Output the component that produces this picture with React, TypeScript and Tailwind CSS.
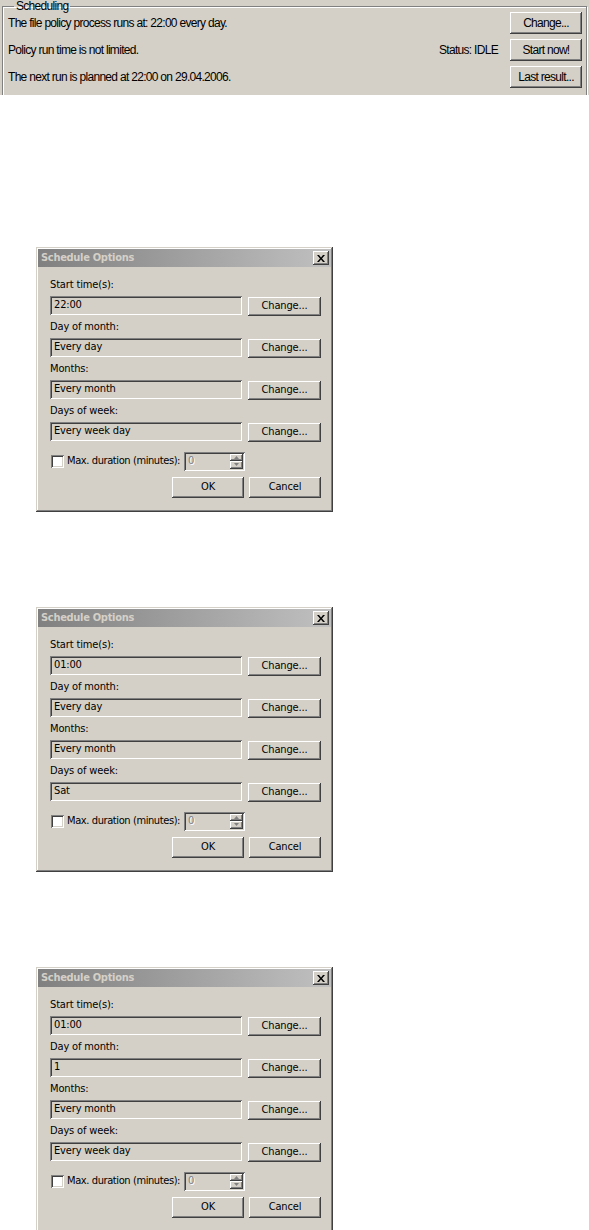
import React from 'react';

const raised =
  'bg-[#d4d0c8] shadow-[inset_-1px_-1px_#404040,inset_1px_1px_#ffffff,inset_-2px_-2px_#808080,inset_2px_2px_#d4d0c8]';
const sunken =
  'shadow-[inset_1px_1px_#808080,inset_-1px_-1px_#ffffff,inset_2px_2px_#404040,inset_-2px_-2px_#d4d0c8]';

const tahoma = "font-['DejaVu_Sans_Condensed','DejaVu_Sans',sans-serif]";
const narrow = "font-['Liberation_Sans',Arial,sans-serif]";

const PanelButton = ({ label }: { label: string }) => (
  <div className={`${raised} w-[72px] h-[22px] flex items-center justify-center text-black`}>
    {label}
  </div>
);

const PanelRow = ({ text, status, button }: { text: string; status?: string; button: string }) => (
  <div className="flex items-center h-[22px]">
    <div className="flex-1">{text}</div>
    {status && <div className="mr-[12px]">{status}</div>}
    <PanelButton label={button} />
  </div>
);

const SchedulingPanel = () => (
  <div className={`${narrow} h-[95px] overflow-hidden bg-[#d4d0c8] pl-[2px] pr-[2px] text-[12px] tracking-[-0.7px] text-black`}>
    <fieldset className="h-[140px] border border-[#808080] shadow-[inset_1px_1px_#ffffff,1px_1px_#ffffff] pl-[5px] pr-[4px]">
      <legend className="ml-[6px] px-[2px] leading-[13px] -mb-[1px]">Scheduling</legend>
      <div className="flex flex-col gap-[5px]">
        <PanelRow text="The file policy process runs at: 22:00 every day." button="Change..." />
        <PanelRow text="Policy run time is not limited." status="Status: IDLE" button="Start now!" />
        <PanelRow text="The next run is planned at 22:00 on 29.04.2006." button="Last result..." />
      </div>
    </fieldset>
  </div>
);

const CloseIcon = () => (
  <svg width="8" height="7" viewBox="0 0 8 7" className="block">
    <path d="M0 0h2l2 2.5L6 0h2L5 3.5 8 7H6L4 4.5 2 7H0l3-3.5z" fill="#000" />
  </svg>
);

const Button = ({ label, w = 'w-[73px]', h = 'h-[19px]' }: { label: string; w?: string; h?: string }) => (
  <div className={`${raised} ${w} ${h} flex items-center justify-center`}>{label}</div>
);

const Field = ({ label, value }: { label: string; value: string }) => (
  <div className="flex flex-col">
    <div className="h-[14px] leading-[14px]">{label}</div>
    <div className="mt-[4px] flex items-start h-[20px] gap-[6px]">
      <div className={`${sunken} w-[192px] h-[19px] flex items-center pl-[4px] bg-[#d4d0c8]`}>{value}</div>
      <div className="mt-[1px]">
        <Button label="Change..." />
      </div>
    </div>
  </div>
);

const SpinArrow = ({ up }: { up?: boolean }) => (
  <svg width="5" height="3" viewBox="0 0 5 3" className="block">
    <path d={up ? 'M2.5 0L5 3H0z' : 'M0 0h5L2.5 3z'} fill="#808080" />
  </svg>
);

const ScheduleDialog = ({
  start,
  day,
  months,
  week,
}: {
  start: string;
  day: string;
  months: string;
  week: string;
}) => (
  <div
    className={`${tahoma} w-[297px] h-[265px] bg-[#d4d0c8] p-[2px] text-[11px] tracking-[-0.15px] text-black shadow-[inset_-1px_-1px_#404040,inset_1px_1px_#d4d0c8,inset_-2px_-2px_#808080,inset_2px_2px_#ffffff]`}
  >
    <div className="h-[18px] bg-[linear-gradient(to_right,#808080,#c0c0c0)] flex items-center justify-between pl-[3px] pr-[2px]">
      <span className="font-bold text-[#d4d0c8] text-[11px] tracking-[-0.3px]">Schedule Options</span>
      <div className={`${raised} w-[16px] h-[14px] flex items-center justify-center`}>
        <CloseIcon />
      </div>
    </div>
    <div className="pl-[12px] pt-[11px] flex flex-col gap-[4px]">
      <Field label="Start time(s):" value={start} />
      <Field label="Day of month:" value={day} />
      <Field label="Months:" value={months} />
      <Field label="Days of week:" value={week} />
      <div className="mt-[5px] flex items-center h-[20px]">
        <div className={`${sunken} w-[13px] h-[13px] bg-white ml-[1px]`} />
        <span className="ml-[3px] tracking-[-0.4px]">Max. duration (minutes):</span>
        <div className={`${sunken} ml-[4px] w-[61px] h-[19px] flex items-center justify-between pl-[4px] pr-[2px]`}>
          <span className="text-[#808080] [text-shadow:1px_1px_#ffffff]">0</span>
          <div className="flex flex-col">
            <div className={`${raised} w-[13px] h-[7px] flex items-center justify-center`}>
              <SpinArrow up />
            </div>
            <div className={`${raised} w-[13px] h-[8px] flex items-center justify-center`}>
              <SpinArrow />
            </div>
          </div>
        </div>
      </div>
      <div className="mt-[2px] flex justify-end gap-[5px] pr-[10px]">
        <Button label="OK" w="w-[72px]" h="h-[21px]" />
        <Button label="Cancel" w="w-[72px]" h="h-[21px]" />
      </div>
    </div>
  </div>
);

export default function App() {
  return (
    <div className="w-[589px] min-h-[1230px] bg-white">
      <SchedulingPanel />
      <div className="pl-[36px] pt-[152px] flex flex-col gap-[95px]">
        <ScheduleDialog start="22:00" day="Every day" months="Every month" week="Every week day" />
        <ScheduleDialog start="01:00" day="Every day" months="Every month" week="Sat" />
        <ScheduleDialog start="01:00" day="1" months="Every month" week="Every week day" />
      </div>
    </div>
  );
}
